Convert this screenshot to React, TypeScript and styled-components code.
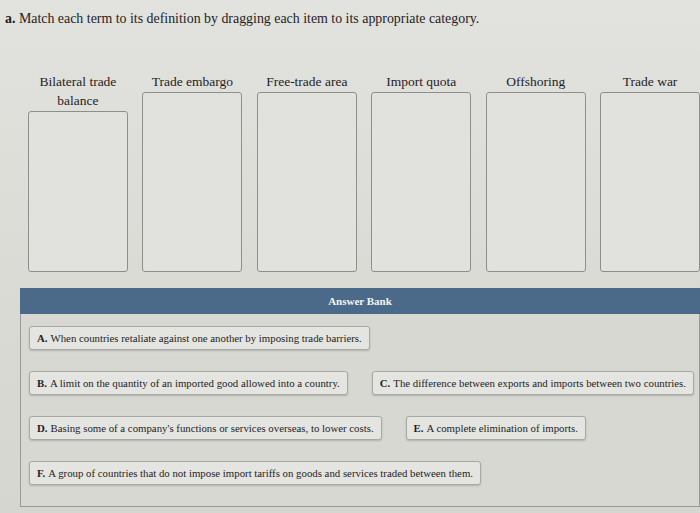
import React from "react";
import styled, { createGlobalStyle } from "styled-components";

const GlobalStyle = createGlobalStyle`
  html, body {
    margin: 0;
    padding: 0;
    background: #d9d9d4;
  }
  body {
    font-family: "Liberation Serif", "Times New Roman", serif;
    color: #1e1e1e;
  }
`;

const Page = styled.div`
  width: 700px;
  height: 513px;
  overflow: hidden;
  background: linear-gradient(180deg, #e2e2de 0%, #dadad5 60%, #d6d6d1 100%);
`;

const Prompt = styled.div`
  padding: 10px 0 0 5px;
  font-size: 13.9px;
  line-height: 18px;
  height: 18px;
`;

const Columns = styled.div`
  display: flex;
  gap: 14.5px;
  padding: 44px 0 0 28px;
`;

const Column = styled.div`
  width: 100px;
  height: 200px;
  display: flex;
  flex-direction: column;
`;

const Label = styled.div`
  font-size: 13.5px;
  line-height: 19px;
  text-align: center;
  padding-bottom: 1px;
`;

const DropBox = styled.div`
  flex: 1;
  border: 1.5px solid #8e8e8c;
  border-radius: 3px;
  background: #e1e1dd;
`;

const Bank = styled.div`
  margin: 16px 0 0 20px;
`;

const BankHeader = styled.div`
  height: 26px;
  background: #4b6a89;
  color: #f4f4f4;
  font-weight: bold;
  font-size: 11px;
  display: flex;
  align-items: center;
  justify-content: center;
`;

const BankBody = styled.div`
  height: 180px;
  border: 1px solid #9a9a98;
  border-top: none;
  background: #d8d8d3;
  padding: 12px 0 0 8px;
  display: flex;
  flex-direction: column;
  gap: 21px;
`;

const Row = styled.div`
  display: flex;
  gap: 24px;
`;

const Item = styled.div`
  height: 24px;
  box-sizing: border-box;
  padding: 0 7px;
  display: flex;
  align-items: center;
  font-size: 10.8px;
  background: #e4e4e0;
  border: 1px solid #a9a9a6;
  border-radius: 3px;
  box-shadow: 0 1px 2px rgba(0, 0, 0, 0.18);
  white-space: nowrap;

  b {
    margin-right: 3px;
  }
`;

const terms = [
  "Bilateral trade balance",
  "Trade embargo",
  "Free-trade area",
  "Import quota",
  "Offshoring",
  "Trade war",
];

const rows: { key: string; text: string }[][] = [
  [{ key: "A.", text: "When countries retaliate against one another by imposing trade barriers." }],
  [
    { key: "B.", text: "A limit on the quantity of an imported good allowed into a country." },
    { key: "C.", text: "The difference between exports and imports between two countries." },
  ],
  [
    { key: "D.", text: "Basing some of a company's functions or services overseas, to lower costs." },
    { key: "E.", text: "A complete elimination of imports." },
  ],
  [
    { key: "F.", text: "A group of countries that do not impose import tariffs on goods and services traded between them." },
  ],
];

export default function App() {
  return (
    <Page>
      <GlobalStyle />
      <Prompt>
        <b>a.</b> Match each term to its definition by dragging each item to its appropriate category.
      </Prompt>
      <Columns>
        {terms.map((t) => (
          <Column key={t}>
            <Label>{t}</Label>
            <DropBox />
          </Column>
        ))}
      </Columns>
      <Bank>
        <BankHeader>Answer Bank</BankHeader>
        <BankBody>
          {rows.map((r, i) => (
            <Row key={i}>
              {r.map((it) => (
                <Item key={it.key}>
                  <b>{it.key}</b>
                  {it.text}
                </Item>
              ))}
            </Row>
          ))}
        </BankBody>
      </Bank>
    </Page>
  );
}
